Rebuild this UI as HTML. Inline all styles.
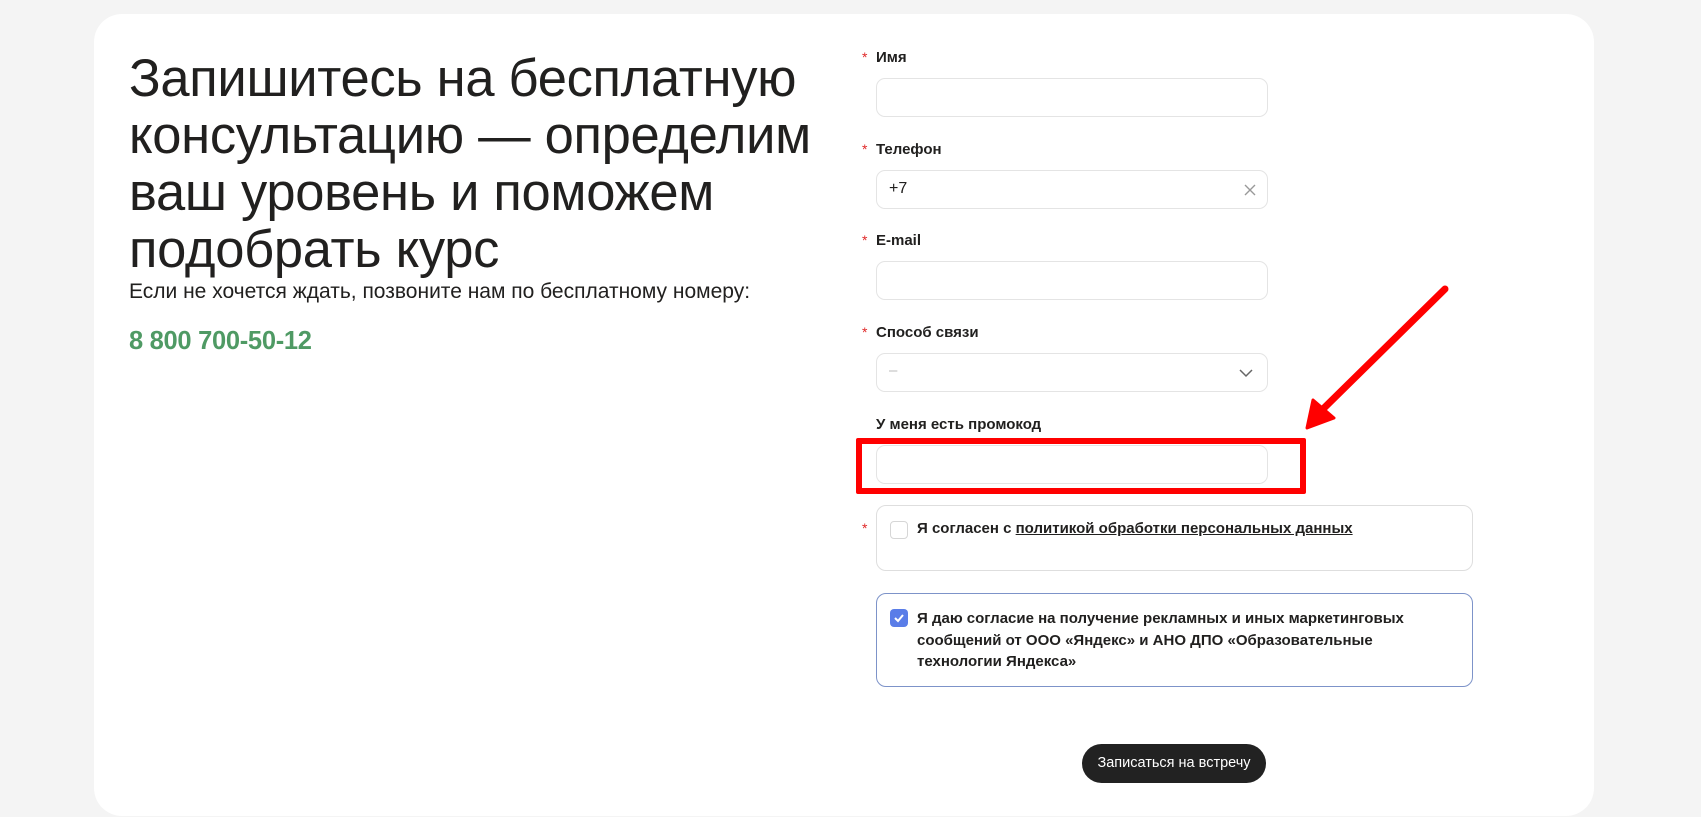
<!DOCTYPE html>
<html><head><meta charset="utf-8"><style>
*{box-sizing:border-box;margin:0;padding:0}
body{width:1701px;height:817px;background:#f4f4f4;font-family:"Liberation Sans",sans-serif;color:#21201f;position:relative;overflow:hidden}
.card{position:absolute;left:94px;top:14px;width:1500px;height:802px;background:#fff;border-radius:28px}
.abs{position:absolute}
h1{position:absolute;left:129px;top:50px;font-size:52.5px;font-weight:400;line-height:57px;letter-spacing:-0.3px;white-space:nowrap;color:#21201f}
.sub{left:129px;top:280px;font-size:21px;white-space:nowrap}
.ph{left:129px;top:327px;font-size:25.5px;font-weight:bold;color:#4f9a64;letter-spacing:-0.3px}
.lbl{position:absolute;left:876px;font-size:15px;font-weight:bold;line-height:18px}
.star{position:absolute;left:862px;color:#e02828;font-size:14px}
.inp{position:absolute;left:876px;width:392px;height:39px;border:1px solid #e4e4e4;border-radius:9px;background:#fff}
.chk{position:absolute;left:876px;width:597px;border:1px solid #dedede;border-radius:10px;background:#fff}
.t{font-size:15px;font-weight:bold;line-height:21.5px;position:absolute;left:40px}
.cb{position:absolute;left:13px;width:18px;height:18px;border-radius:4px}
.btn{position:absolute;left:1082px;top:744px;width:184px;height:39px;border-radius:20px;background:#222;color:#fff;font-size:14.5px;text-align:center;line-height:39px}
</style></head><body>
<div class="card"></div>
<h1>Запишитесь на бесплатную<br>консультацию — определим<br>ваш уровень и поможем<br>подобрать курс</h1>
<div class="abs sub">Если не хочется ждать, позвоните нам по бесплатному номеру:</div>
<div class="abs ph">8 800 700-50-12</div>

<span class="star" style="top:49px">*</span><div class="lbl" style="top:49px">Имя</div>
<div class="inp" style="top:78px"></div>
<span class="star" style="top:141px">*</span><div class="lbl" style="top:141px">Телефон</div>
<div class="inp" style="top:170px"><span style="position:absolute;left:12px;top:9px;font-size:16px">+7</span>
<svg style="position:absolute;left:367px;top:13px" width="12" height="12" viewBox="0 0 12 12"><path d="M1 1L11 11M11 1L1 11" stroke="#999" stroke-width="1.4"/></svg></div>
<span class="star" style="top:232px">*</span><div class="lbl" style="top:232px">E-mail</div>
<div class="inp" style="top:261px"></div>
<span class="star" style="top:324px">*</span><div class="lbl" style="top:324px">Способ связи</div>
<div class="inp" style="top:353px"><span style="position:absolute;left:12px;top:8px;color:#bbb;font-size:15px">–</span>
<svg style="position:absolute;left:362px;top:15px" width="14" height="9" viewBox="0 0 14 9"><path d="M1 1L7 7L13 1" stroke="#666" stroke-width="1.5" fill="none"/></svg></div>
<div class="lbl" style="top:416px">У меня есть промокод</div>
<div class="inp" style="top:445px"></div>
<div class="abs" style="left:856px;top:438px;width:450px;height:56px;border:6px solid #f00;border-radius:2px"></div>
<svg class="abs" style="left:0;top:0" width="1701" height="817"><path d="M1445 289L1322 410" stroke="#f00" stroke-width="7" stroke-linecap="round"/><path d="M1307 428L1313 400L1334 418Z" fill="#f00" stroke="#f00" stroke-width="3" stroke-linejoin="round"/></svg>

<span class="star" style="top:520px">*</span>
<div class="chk" style="top:505px;height:66px"><div class="cb" style="top:15px;border:1px solid #d6d6d6"></div><div class="t" style="top:12px">Я согласен с <u>политикой обработки персональных данных</u></div></div>
<div class="chk" style="top:593px;height:94px;border-color:#7d93c9"><div class="cb" style="top:15px;background:#5a7de8"><svg width="18" height="18" viewBox="0 0 18 18"><path d="M5 9L8 12L13 6" stroke="#fff" stroke-width="2" fill="none"/></svg></div><div class="t" style="top:14px">Я даю согласие на получение рекламных и иных маркетинговых<br>сообщений от ООО «Яндекс» и АНО ДПО «Образовательные<br>технологии Яндекса»</div></div>
<div class="btn">Записаться на встречу</div>
</body></html>
